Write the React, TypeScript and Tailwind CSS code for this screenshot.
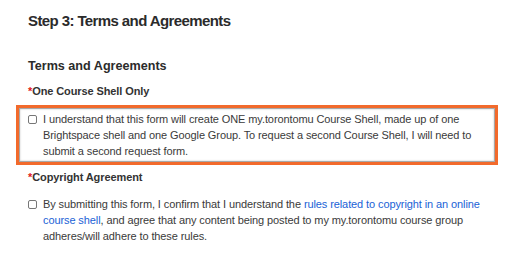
import React from 'react';

const Req = () => <span className="text-[#e0201b]">*</span>;

export default function App() {
  return (
    <div className="h-[269px] w-[525px] overflow-hidden bg-white font-['Liberation_Sans',Arial,sans-serif] text-[#333]">
      <div className="pl-[28px] pr-[30px] pt-[11px]">
        <h2 className="text-[15px] font-bold leading-[20px] tracking-[-0.6px] text-[#2b2b2b]">Step 3: Terms and Agreements</h2>
        <h3 className="mt-[27px] text-[12.6px] font-bold leading-[16px] text-[#2b2b2b]">Terms and Agreements</h3>
        <div className="mt-[10px] text-[11px] font-bold leading-[14px] tracking-[-0.1px]">
          <Req />One Course Shell Only
        </div>

        <div className="-ml-[12px] -mr-[3px] mt-[7px] border-[3px] border-[#f26a2c]">
          <div className="border border-[#a8a8a8] py-[2px] pl-[8px] pr-[4px] shadow-[inset_0_0_2px_rgba(0,0,0,0.25)]">
            <label className="flex items-start gap-[6px] text-[11px] leading-[16px] tracking-[-0.1px] text-[#3a3a3a]">
              <input type="checkbox" className="mt-[4px] h-[9px] w-[9px] shrink-0 appearance-none rounded-[2px] border border-[#777] bg-white" />
              <span>
                I understand that this form will create ONE my.torontomu Course Shell, made up of one Brightspace shell and one Google Group. To request a second Course Shell, I will need to submit a second request form.
              </span>
            </label>
          </div>
        </div>

        <div className="mt-[5px] text-[11px] font-bold leading-[14px] tracking-[-0.1px]">
          <Req />Copyright Agreement
        </div>

        <label className="mt-[12px] flex items-start gap-[6px] text-[11px] leading-[16px] tracking-[-0.1px] text-[#3a3a3a]">
          <input type="checkbox" className="mt-[4px] h-[9px] w-[9px] shrink-0 appearance-none rounded-[2px] border border-[#777] bg-white" />
          <span>
            By submitting this form, I confirm that I understand the{' '}
            <a className="text-[#1a62d6]">rules related to copyright in an online course shell</a>, and agree that any content being posted to my my.torontomu course group adheres/will adhere to these rules.
          </span>
        </label>
      </div>
    </div>
  );
}
